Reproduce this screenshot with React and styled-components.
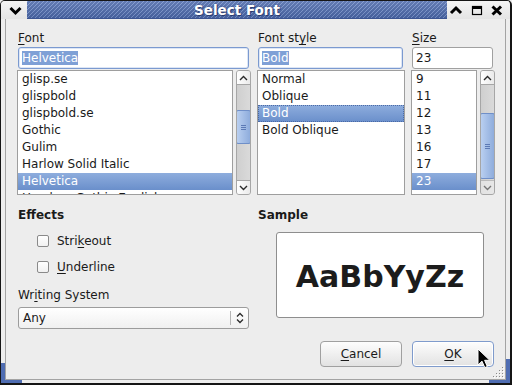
import React from 'react';
import styled, { createGlobalStyle, css } from 'styled-components';

const Global = createGlobalStyle`
  html, body { margin: 0; padding: 0; background: #ededed; }
  body {
    width: 512px; height: 385px; overflow: hidden;
    font-family: "DejaVu Sans", "Liberation Sans", sans-serif;
    font-size: 12px; color: #1a1a1a;
  }
  * { box-sizing: border-box; }
`;

const Window = styled.div`
  position: relative;
  width: 512px;
  height: 385px;
  border-style: solid;
  border-color: #151515;
  border-width: 1px 2px 2px 1px;
  border-radius: 5px 5px 0 0;
  background: #ededed;
  display: flex;
  flex-direction: column;
  overflow: hidden;
`;

const TitleBar = styled.div`
  height: 18px;
  flex: none;
  display: flex;
  padding: 0 3px 0 4px;
  background: linear-gradient(#f4f4f4, #e4e4e4);
`;

const MenuButton = styled.div`
  width: 22px;
  display: flex;
  align-items: center;
  justify-content: center;
`;

const TitleStripe = styled.div`
  flex: 1;
  display: flex;
  align-items: center;
  justify-content: center;
  border-bottom: 1px solid #3b5492;
  background:
    linear-gradient(rgba(255,255,255,0.14), rgba(0,0,0,0.08)),
    repeating-linear-gradient(135deg, #7a94cd 0px, #7a94cd 1.2px, #4a67a8 1.2px, #4a67a8 2.83px);
`;

const TitleText = styled.span`
  font-family: "DejaVu Sans", sans-serif;
  font-weight: bold;
  font-size: 13.5px;
  color: #ffffff;
  text-shadow: 1px 1px 0 rgba(25, 40, 90, 0.65), 0 0 2px rgba(25, 40, 90, 0.6);
  padding-top: 1px;
`;

const WinButton = styled.div`
  width: 20px;
  display: flex;
  align-items: center;
  justify-content: center;
`;

const Frame = styled.div`
  flex: 1;
  display: flex;
  padding: 0 4px 3px 4px;
`;

const Content = styled.div`
  position: relative;
  flex: 1;
  display: flex;
  flex-direction: column;
  border: 1px solid #a3a3a3;
  border-top: none;
  padding: 12px 9px 0 11px;
`;

const TopGrid = styled.div`
  display: grid;
  grid-template-columns: 234px 148px 84px;
  column-gap: 6px;
`;

const Column = styled.div`
  display: flex;
  flex-direction: column;
`;

const FieldLabel = styled.div`
  height: 15px;
  line-height: 15px;
  padding-left: 1px;
  white-space: nowrap;
`;

const U = styled.span`
  text-decoration: underline;
  text-underline-offset: 2px;
`;

const TextField = styled.div`
  height: 22px;
  margin: 1px 2px 0 1px;
  display: flex;
  align-items: center;
  padding-left: 3px;
  background: #ffffff;
  border: 1px solid #a0a0a0;
  border-radius: 3px;
  ${p => p.$focused && css`
    border-color: #7b9ad0;
    box-shadow: inset 0 0 0 1px #dde6f5;
  `}
`;

const SelectedText = styled.span`
  background: #7fa0d6;
  color: #ffffff;
  line-height: 14px;
`;

const ListRow = styled.div`
  display: flex;
  gap: 3px;
  margin-top: 1px;
  height: 125px;
`;

const ListBox = styled.div`
  flex: 1;
  min-width: 0;
  background: #ffffff;
  border: 1px solid #9e9e9e;
  overflow: hidden;
`;

const Item = styled.div`
  height: 17px;
  line-height: 17px;
  padding-left: 4px;
  white-space: nowrap;
  ${p => p.$selected && css`
    background: linear-gradient(#8eaddd, #6a8fcb);
    color: #ffffff;
  `}
  ${p => p.$focus && css`
    outline: 1px dotted #4b6aa5;
    outline-offset: -1px;
  `}
`;

const ScrollBar = styled.div`
  width: 15px;
  flex: none;
  display: flex;
  flex-direction: column;
  border: 1px solid #a6a6a6;
  border-radius: 3px;
  background: linear-gradient(90deg, #cfcfcf, #dadada);
  overflow: hidden;
`;

const ScrollButton = styled.div`
  height: 14px;
  flex: none;
  display: flex;
  align-items: center;
  justify-content: center;
  background: linear-gradient(90deg, #ffffff, #eaeaea);
  ${p => p.$top ? css`border-bottom: 1px solid #a6a6a6;` : css`border-top: 1px solid #a6a6a6;`}
  ${p => p.$disabled && css`
    background: #f2f2f2;
    opacity: 0.55;
  `}
`;

const Track = styled.div`
  flex: 1;
  display: flex;
  flex-direction: column;
`;

const Thumb = styled.div`
  margin: ${p => p.$offset}px -1px 0 -1px;
  height: ${p => p.$size}px;
  border: 1px solid #6f8fc8;
  border-radius: 2px;
  background: linear-gradient(90deg, #b9cff0, #8eacdc);
  display: flex;
  align-items: center;
  justify-content: center;
`;

const LowerRow = styled.div`
  display: grid;
  grid-template-columns: 234px 238px;
  column-gap: 6px;
  margin-top: 13px;
`;

const SectionTitle = styled.div`
  height: 15px;
  line-height: 15px;
  font-weight: bold;
  padding-left: 1px;
`;

const CheckList = styled.div`
  display: flex;
  flex-direction: column;
  margin-top: 5px;
`;

const CheckRow = styled.div`
  height: 26px;
  display: flex;
  align-items: center;
  gap: 8px;
  padding-left: 20px;
`;

const CheckBox = styled.span`
  width: 12px;
  height: 12px;
  border: 1px solid #8a8a8a;
  border-radius: 2px;
  background: linear-gradient(#ffffff, #f1f1f1);
`;

const SubLabel = styled(FieldLabel)`
  margin-top: 8px;
`;

const Combo = styled.div`
  height: 22px;
  margin: 4px 2px 0 1px;
  display: flex;
  align-items: center;
  border: 1px solid #9c9c9c;
  border-radius: 3px;
  background: linear-gradient(#ffffff, #f0f0f0);
  padding-left: 4px;
`;

const ComboText = styled.span`
  flex: 1;
`;

const ComboArrow = styled.span`
  width: 18px;
  height: 14px;
  border-left: 1px solid #b5b5b5;
  display: flex;
  align-items: center;
  justify-content: center;
`;

const SampleBox = styled.div`
  height: 86px;
  margin: 9px 11px 0 19px;
  background: #ffffff;
  border: 1px solid #8e8e8e;
  border-radius: 3px;
  display: flex;
  align-items: center;
  justify-content: center;
`;

const SampleText = styled.span`
  font-family: "DejaVu Sans", sans-serif;
  font-weight: bold;
  font-size: 30px;
  color: #1c1c1c;
  padding-top: 2px;
`;

const ButtonRow = styled.div`
  display: flex;
  justify-content: flex-end;
  gap: 10px;
  margin: 12px 2px 0 0;
`;

const Button = styled.div`
  width: 82px;
  height: 26px;
  display: flex;
  align-items: center;
  justify-content: center;
  border: 1px solid #a0a0a0;
  border-radius: 4px;
  background: linear-gradient(#fdfdfd, #e2e2e2);
  ${p => p.$default && css`
    border-color: #7f9bcc;
    box-shadow: inset 0 0 0 1px #ffffff;
  `}
`;

const Grip = styled.svg`
  position: absolute;
  right: 1px;
  bottom: 1px;
`;

const Corner = styled.div`
  position: absolute;
  background: #4f6db2;
  ${p => p.$pos}
`;

const Cursor = styled.svg`
  position: absolute;
  left: 476px;
  top: 347px;
`;

const ChevronDown = () => (
  <svg width="22" height="18" viewBox="0 0 22 18">
    <path d="M5.5 7 L10.5 12 L15.5 7" fill="none" stroke="#000" strokeWidth="3" />
  </svg>
);
const ChevronUp = () => (
  <svg width="20" height="18" viewBox="0 0 20 18">
    <path d="M4 12 L9 7 L14 12" fill="none" stroke="#000" strokeWidth="3" />
  </svg>
);
const MaxIcon = () => (
  <svg width="20" height="18" viewBox="0 0 20 18">
    <rect x="5.5" y="5.5" width="9" height="8" fill="none" stroke="#000" strokeWidth="1.2" />
    <rect x="5" y="5" width="10" height="3" fill="#000" />
  </svg>
);
const CloseIcon = () => (
  <svg width="20" height="18" viewBox="0 0 20 18">
    <path d="M5.5 5.5 L14 13.5 M14 5.5 L5.5 13.5" fill="none" stroke="#000" strokeWidth="3" />
  </svg>
);

const SmallUp = () => (
  <svg width="9" height="6" viewBox="0 0 9 6">
    <path d="M1 5 L4.5 1.5 L8 5" fill="none" stroke="#2a2a2a" strokeWidth="1.4" />
  </svg>
);
const SmallDown = () => (
  <svg width="9" height="6" viewBox="0 0 9 6">
    <path d="M1 1 L4.5 4.5 L8 1" fill="none" stroke="#2a2a2a" strokeWidth="1.4" />
  </svg>
);
const GripLines = () => (
  <svg width="7" height="7" viewBox="0 0 7 7">
    <path d="M1 1.5 H6 M1 3.5 H6 M1 5.5 H6" stroke="#5c7ab5" strokeWidth="1" />
  </svg>
);
const UpDown = () => (
  <svg width="8" height="12" viewBox="0 0 8 12">
    <path d="M1 4.5 L4 1.5 L7 4.5 M1 7.5 L4 10.5 L7 7.5" fill="none" stroke="#2a2a2a" strokeWidth="1.3" />
  </svg>
);

const Scroll = ({ offset, size, downDisabled }) => (
  <ScrollBar>
    <ScrollButton $top><SmallUp /></ScrollButton>
    <Track>
      <Thumb $offset={offset} $size={size}><GripLines /></Thumb>
    </Track>
    <ScrollButton $disabled={downDisabled}><SmallDown /></ScrollButton>
  </ScrollBar>
);

const fonts = ['glisp.se', 'glispbold', 'glispbold.se', 'Gothic', 'Gulim', 'Harlow Solid Italic', 'Helvetica', 'Hershey Gothic English'];
const styles = ['Normal', 'Oblique', 'Bold', 'Bold Oblique'];
const sizes = ['9', '11', '12', '13', '16', '17', '23'];

export default function App() {
  return (
    <>
      <Global />
      <Window>
        <TitleBar>
          <MenuButton><ChevronDown /></MenuButton>
          <TitleStripe><TitleText>Select Font</TitleText></TitleStripe>
          <WinButton><ChevronUp /></WinButton>
          <WinButton><MaxIcon /></WinButton>
          <WinButton><CloseIcon /></WinButton>
        </TitleBar>
        <Frame>
          <Content>
            <TopGrid>
              <Column>
                <FieldLabel><U>F</U>ont</FieldLabel>
                <TextField $focused><SelectedText>Helvetica</SelectedText></TextField>
                <ListRow>
                  <ListBox>
                    {fonts.map(f => <Item key={f} $selected={f === 'Helvetica'}>{f}</Item>)}
                  </ListBox>
                  <Scroll offset={25} size={34} />
                </ListRow>
              </Column>
              <Column>
                <FieldLabel>Font st<U>y</U>le</FieldLabel>
                <TextField $focused><SelectedText>Bold</SelectedText></TextField>
                <ListRow>
                  <ListBox>
                    {styles.map(s => <Item key={s} $selected={s === 'Bold'} $focus={s === 'Bold'}>{s}</Item>)}
                  </ListBox>
                </ListRow>
              </Column>
              <Column>
                <FieldLabel><U>S</U>ize</FieldLabel>
                <TextField>23</TextField>
                <ListRow>
                  <ListBox>
                    {sizes.map(s => <Item key={s} $selected={s === '23'}>{s}</Item>)}
                  </ListBox>
                  <Scroll offset={28} size={66} downDisabled />
                </ListRow>
              </Column>
            </TopGrid>
            <LowerRow>
              <Column>
                <SectionTitle>Effects</SectionTitle>
                <CheckList>
                  <CheckRow><CheckBox /><span>Stri<U>k</U>eout</span></CheckRow>
                  <CheckRow><CheckBox /><span><U>U</U>nderline</span></CheckRow>
                </CheckList>
                <SubLabel>Wr<U>i</U>ting System</SubLabel>
                <Combo>
                  <ComboText>Any</ComboText>
                  <ComboArrow><UpDown /></ComboArrow>
                </Combo>
              </Column>
              <Column>
                <SectionTitle>Sample</SectionTitle>
                <SampleBox><SampleText>AaBbYyZz</SampleText></SampleBox>
              </Column>
            </LowerRow>
            <ButtonRow>
              <Button><span><U>C</U>ancel</span></Button>
              <Button $default><span><U>O</U>K</span></Button>
            </ButtonRow>
            <Grip width="12" height="12" viewBox="0 0 12 12">
              {[[10,1],[10,4],[7,4],[10,7],[7,7],[4,7],[10,10],[7,10],[4,10],[1,10]].map(([x,y]) => (
                <g key={`${x}-${y}`}>
                  <rect x={x + 1} y={y + 1} width="1" height="1" fill="#ffffff" />
                  <rect x={x} y={y} width="1" height="1" fill="#8a8a8a" />
                </g>
              ))}
            </Grip>
          </Content>
        </Frame>
        <Corner $pos="left: 0; bottom: 0; width: 4px; height: 20px;" />
        <Corner $pos="left: 0; bottom: 0; width: 21px; height: 3px;" />
        <Corner $pos="right: 0; bottom: 0; width: 4px; height: 24px;" />
        <Corner $pos="right: 0; bottom: 0; width: 21px; height: 3px;" />
        <Cursor width="14" height="22" viewBox="0 0 14 22">
          <path d="M1 1 L1 17 L5 13.2 L7.8 19.6 L10.3 18.5 L7.6 12.3 L12.8 12.3 Z" fill="#000" stroke="#fff" strokeWidth="1" strokeLinejoin="round" />
        </Cursor>
      </Window>
    </>
  );
}
